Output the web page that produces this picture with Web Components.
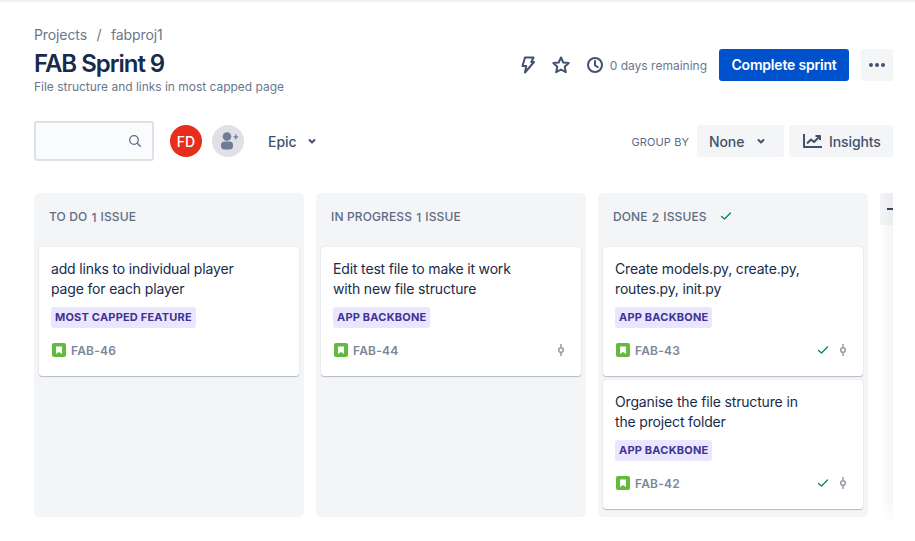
<!DOCTYPE html>
<html><head><meta charset="utf-8"><style>
html,body{margin:0;padding:0;background:#fff}
body{font-family:Inter,"Liberation Sans",sans-serif;overflow:hidden;width:915px;height:541px}
</style></head><body>
<template id="tpl-app"><style>
:host{display:block;box-sizing:border-box;width:915px;height:541px;border-top:2px solid #f0f1f3;padding:0 22px 0 34px;color:#172b4d}
.crumbs{display:flex;gap:9.5px;font-size:14px;line-height:20px;color:#6b778c;padding-top:23px;height:20px;letter-spacing:-.1px}
.head{display:flex;justify-content:space-between;align-items:flex-start}
h1{margin:0;font-size:24px;font-weight:600;line-height:28px;padding-top:5px;letter-spacing:-1.02px;color:#172b4d}
.sub{font-size:12px;line-height:16px;color:#6b778c;margin-top:1px;letter-spacing:-.02px}
.actions{display:flex;align-items:center;margin-top:4px;height:32px;font-size:12px;color:#6b778c}
.actions svg{display:block}
.days{margin-left:3px;margin-right:12px}
.btn{background:#0052cc;color:#fff;font-size:14px;font-weight:600;height:32px;line-height:32px;border-radius:3px;width:130px;text-align:center;letter-spacing:-.2px;white-space:nowrap}
.more{margin-left:12px;width:32px;height:32px;border-radius:3px;background:#f4f5f7;display:flex;align-items:center;justify-content:center}
.tools{display:flex;align-items:center;height:40px;margin-top:26px}
.search{box-sizing:border-box;width:120px;height:40px;border:2px solid #dfe1e6;border-radius:3px;background:#fafbfc;display:flex;align-items:center;justify-content:flex-end;padding-right:9px}
.av{width:32px;height:32px;border-radius:50%;display:flex;align-items:center;justify-content:center}
.red{background:#e52e1c;color:#fff;font-size:14px;font-weight:500;margin-left:16px}
.add{background:#dfe1e6;margin-left:10px}
.epic{margin-left:24px;font-size:14px;font-weight:500;color:#42526e;display:flex;align-items:center;gap:7px}
.grow{flex:1}
.gb{font-size:11px;color:#5e6c84;margin-right:8px;letter-spacing:.1px;padding-top:2px}
.sec{height:32px;border-radius:3px;background:#f4f5f7;display:flex;align-items:center;font-size:14px;font-weight:500;color:#42526e;box-sizing:border-box;letter-spacing:-.1px}
.none{width:87px;padding-left:12px;gap:9px}
.ins{width:104px;margin-left:5px;padding-left:14px;gap:6px}
.board{display:flex;gap:12px;margin-top:32px;height:330px;overflow:hidden;width:859px}
.stub{flex:none;width:13px;height:330px;position:relative;background:linear-gradient(90deg,#fff,#f3f4f7);-webkit-mask-image:linear-gradient(#000 93%,transparent);mask-image:linear-gradient(#000 93%,transparent)}
.stub i{display:block;height:32px;background:linear-gradient(90deg,#f4f5f7,#ebecf1);border-radius:3px 0 0 3px;position:relative}
.stub i::after{content:"";position:absolute;left:7px;top:15px;width:6px;height:2px;background:#344563}
</style>
<div class="crumbs"><span>Projects</span><span>/</span><span>fabproj1</span></div>
<div class="head"><div><h1>FAB Sprint 9</h1><div class="sub">File structure and links in most capped page</div></div>
<div class="actions">
<svg width="24" height="24" viewBox="0 0 24 24" style="margin-right:10px" fill="none" stroke="#42526e" stroke-width="2" stroke-linejoin="round"><path d="M10 4.500h8.500l-2.200 4.500H19l-9 10.500 1.200-6.500H7.500z"/></svg>
<svg width="24" height="24" viewBox="0 0 24 24" style="margin-right:10px" fill="none" stroke="#42526e" stroke-width="2" stroke-linejoin="round"><path d="M12 4.500l2.300 5 5.400.6-4 3.700 1.100 5.400L12 16.500l-4.800 2.700 1.100-5.400-4-3.700 5.400-.6z"/></svg>
<svg width="24" height="24" viewBox="0 0 24 24" fill="none" stroke="#42526e" stroke-width="2" stroke-linecap="round" stroke-linejoin="round"><circle cx="12" cy="12" r="7"/><path d="M12 8v4.200l2.800 2"/></svg>
<span class="days">0 days remaining</span>
<div class="btn">Complete sprint</div>
<div class="more"><svg width="24" height="24" viewBox="0 0 24 24" fill="#42526e"><circle cx="6" cy="12" r="2"/><circle cx="12" cy="12" r="2"/><circle cx="18" cy="12" r="2"/></svg></div>
</div></div>
<div class="tools">
<div class="search"><svg width="16" height="16" viewBox="0 0 16 16" fill="none" stroke="#5e6c84" stroke-width="1.300" stroke-linecap="round"><circle cx="7" cy="7" r="4.300"/><path d="M10.300 10.300l3 3"/></svg></div>
<div class="av red">FD</div>
<div class="av add"><svg width="24" height="24" viewBox="0 0 24 24" fill="#6f7c91"><circle cx="11" cy="7.500" r="4.300"/><rect x="5" y="12.500" width="12" height="8" rx="3.500"/><path d="M17.500 7.200h1.600V5.600h1.400v1.600h1.600v1.400h-1.600v1.600h-1.400V8.600h-1.600z"/></svg></div>
<div class="epic">Epic <svg width="16" height="16" viewBox="0 0 16 16" fill="none" stroke="#42526e" stroke-width="2" stroke-linecap="round" stroke-linejoin="round"><path d="M5.500 7l2.500 2.500L10.500 7"/></svg></div>
<div class="grow"></div>
<div class="gb">GROUP BY</div>
<div class="sec none">None <svg width="16" height="16" viewBox="0 0 16 16" fill="none" stroke="#42526e" stroke-width="2" stroke-linecap="round" stroke-linejoin="round"><path d="M5.500 7l2.500 2.500L10.500 7"/></svg></div>
<div class="sec ins"><svg width="20" height="16" viewBox="0 0 20 16" fill="none" stroke="#42526e" stroke-width="2" stroke-linejoin="round"><path d="M1 1v13h18" /><path d="M4 10.500l4-4 3 2.500 5-5M12.500 3H17v4"/></svg>Insights</div>
</div>
<div class="board"><slot></slot><div class="stub"><i></i></div></div>
</template>

<template id="tpl-col"><style>
:host{display:block;flex:none;box-sizing:border-box;width:270px;height:324px;background:#f4f5f7;border-radius:5px;padding:0 5px}
.h{height:54px;display:flex;align-items:center;padding:0 10px 8px;font-size:12px;font-weight:500;color:#5e6c84;gap:4px;box-sizing:border-box;letter-spacing:.13px}
.n{font-size:12px;position:relative;top:1px}
.list{display:flex;flex-direction:column;gap:4px}
</style><div class="h"><span id="t"></span><span class="n" id="n"></span><span id="i"></span><span id="c"></span></div><div class="list"><slot></slot></div></template>

<template id="tpl-card"><style>
:host{display:block;box-sizing:border-box;width:260px;height:129px;background:#fff;border-radius:3px;box-shadow:0 1px 1px rgba(9,30,66,.25),0 0 1px rgba(9,30,66,.2);padding:12px}
.s{font-size:14px;line-height:20px;color:#172b4d;max-width:210px;height:40px;white-space:pre-line;letter-spacing:-.16px}
.l{display:inline-block;background:#eae6ff;color:#403294;font-size:11px;font-weight:700;line-height:21px;height:21px;padding:0 4px;border-radius:3px;margin-top:8px;letter-spacing:.2px;vertical-align:top}
.f{display:flex;align-items:center;margin-top:12px;height:20px;padding-left:1px}
.k{font-size:12px;font-weight:600;color:#7a869a;margin-left:5px;flex:1;letter-spacing:.2px}
.ico{display:block}
</style><div class="s" id="s"></div><div class="l" id="l"></div>
<div class="f"><svg class="ico" width="14" height="14" viewBox="0 0 14 14"><rect width="14" height="14" rx="2" fill="#63ba3c"/><path d="M4 3.500h6v7.500L7 9l-3 2z" fill="#fff"/></svg><span class="k" id="k"></span><span id="x"></span></div></template>

<script>
const mk=(id)=>class extends HTMLElement{constructor(){super();this.attachShadow({mode:'open'}).appendChild(document.getElementById(id).content.cloneNode(true));}};
const check='<svg width="12" height="12" viewBox="0 0 12 12" fill="none" stroke="#00875a" stroke-width="1.300" stroke-linecap="round" stroke-linejoin="round" style="display:block"><path d="M1.500 6.500l3 2.500L10.500 3"/></svg>';
const commit='<svg width="10" height="14" viewBox="0 0 10 14" fill="none" stroke="#97a0af" stroke-width="1.600" style="display:block"><circle cx="5" cy="7" r="2.300"/><path d="M5 1v3.500M5 9.500V13"/></svg>';
customElements.define('board-app',mk('tpl-app'));
customElements.define('board-col',class extends mk('tpl-col'){connectedCallback(){const r=this.shadowRoot;r.getElementById('t').textContent=this.getAttribute('t');r.getElementById('n').textContent=this.getAttribute('n');r.getElementById('i').textContent=this.getAttribute('i');if(this.hasAttribute('done'))r.getElementById('c').innerHTML=check.replace('style="display:block"','style="display:block;margin-left:9px"');}});
customElements.define('board-card',class extends mk('tpl-card'){connectedCallback(){const r=this.shadowRoot;r.getElementById('s').textContent=this.getAttribute('s');r.getElementById('l').textContent=this.getAttribute('l');r.getElementById('k').textContent=this.getAttribute('k');const f=r.getElementById('x');f.style.display='flex';f.style.alignItems='center';f.style.paddingRight='3px';f.style.gap='9px';const h=[];if(this.hasAttribute('done'))h.push(check);if(this.hasAttribute('commit'))h.push(commit);f.innerHTML=h.join('');}});
</script>
<board-app>
<board-col t="TO DO" n="1" i="ISSUE"><board-card s="add links to individual player
page for each player" l="MOST CAPPED FEATURE" k="FAB-46"></board-card></board-col>
<board-col t="IN PROGRESS" n="1" i="ISSUE"><board-card s="Edit test file to make it work
with new file structure" l="APP BACKBONE" k="FAB-44" commit></board-card></board-col>
<board-col t="DONE" n="2" i="ISSUES" done><board-card s="Create models.py, create.py,
routes.py, init.py" l="APP BACKBONE" k="FAB-43" done commit></board-card><board-card s="Organise the file structure in
the project folder" l="APP BACKBONE" k="FAB-42" done commit></board-card></board-col>
</board-app>
</body></html>
